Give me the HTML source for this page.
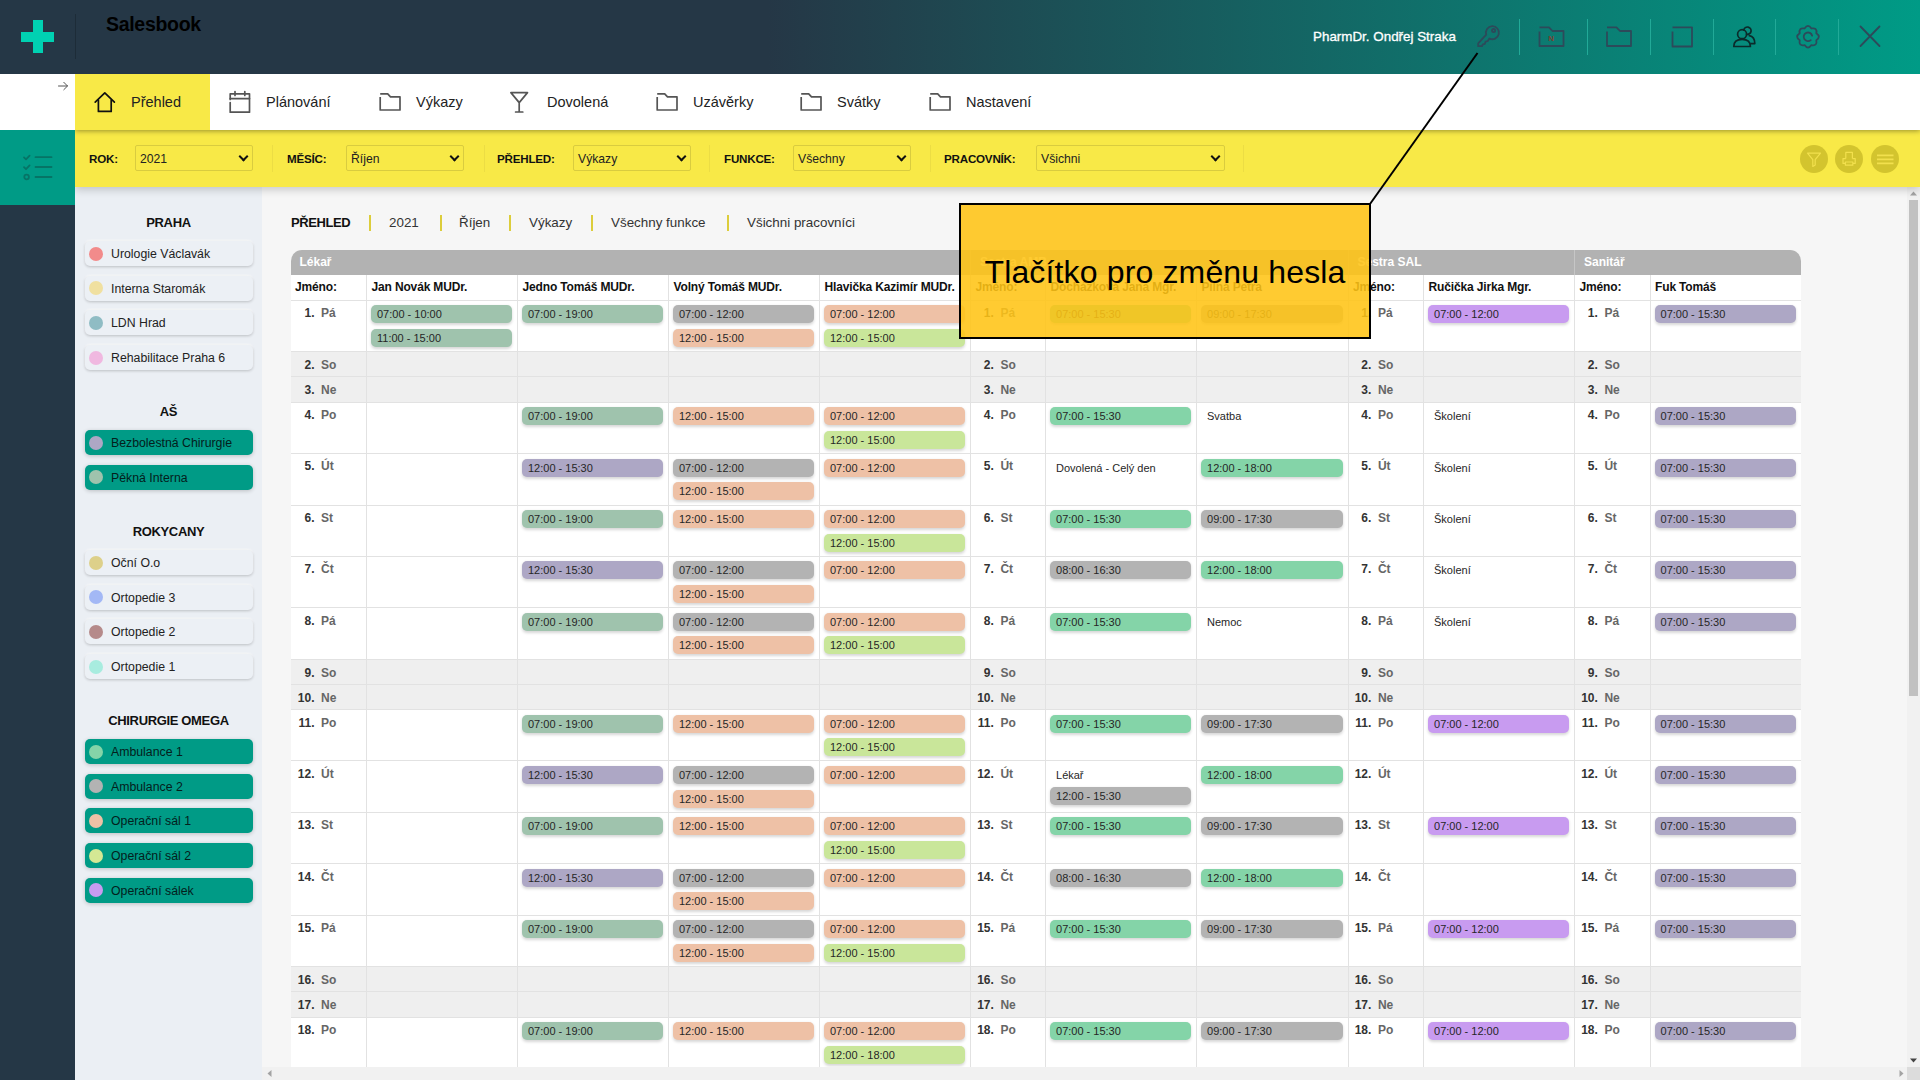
<!DOCTYPE html>
<html lang="cs">
<head>
<meta charset="utf-8">
<title>Salesbook</title>
<style>
*{box-sizing:border-box}
html,body{margin:0;padding:0}
body{width:1920px;height:1080px;overflow:hidden;position:relative;background:#f6f6f6;font-family:"Liberation Sans",sans-serif;color:#222}
#hdr{position:absolute;left:0;top:0;width:1920px;height:74px;background:linear-gradient(90deg,#253746 0%,#253746 40%,#009b86 100%)}
#logo{position:absolute;left:21px;top:20px;width:33px;height:33px}
#logo:before{content:"";position:absolute;left:11.5px;top:0;width:10px;height:33px;background:#00d1b2}
#logo:after{content:"";position:absolute;left:0;top:11.5px;width:33px;height:10px;background:#00d1b2}
#hdiv{position:absolute;left:75px;top:14px;width:1px;height:45px;background:#1d2c38}
#brand{position:absolute;left:106px;top:12px;font-weight:bold;font-size:19.5px;color:#000;line-height:24px;letter-spacing:-0.3px}
#user{position:absolute;left:1313px;top:28px;-webkit-text-stroke:.3px #fff;font-size:13.4px;color:#fff;line-height:18px;white-space:nowrap}
.hd{position:absolute;top:19px;width:1.8px;height:36px;background:#22aa98;margin-left:.7px}
.hi{position:absolute}
#side{position:absolute;left:0;top:74px;width:75px;height:1006px;background:#253746}
#sidew{position:absolute;left:0;top:0;width:75px;height:56px;background:#fff}
#sidet{position:absolute;left:0;top:56px;width:75px;height:75px;background:#009b86}
#nav{position:absolute;left:75px;top:74px;width:1845px;height:56px;background:#fff;box-shadow:0 1px 5px rgba(0,0,0,.38);z-index:3;clip-path:inset(0 0 -12px 0)}
.tab{position:absolute;top:0;height:56px;font-size:14.5px;line-height:56px;color:#222;white-space:nowrap}
.tab svg{position:absolute}
.tab span{position:absolute;top:0}
#tab0{left:0;width:135px;background:#f8e947}
#fbar{position:absolute;left:75px;top:130px;width:1845px;height:57px;background:#f8e947;box-shadow:0 3px 8px rgba(0,0,0,.18);z-index:2;clip-path:inset(0 0 -16px 0)}
.fl{position:absolute;top:0;line-height:57px;font-size:11.6px;letter-spacing:-.2px;font-weight:bold;color:#111;white-space:nowrap}
.fs{position:absolute;top:15px;height:26px;border:1px solid #d9cc3f;border-radius:2px;font-size:12.2px;line-height:24px;padding:1px 0 0 4px;color:#222}
.fs:after{content:"";position:absolute;right:5.4px;top:7.3px;width:5px;height:5px;border-right:2px solid #111;border-bottom:2px solid #111;transform:rotate(45deg)}
.fsep{position:absolute;top:15px;width:1px;height:27px;background:#ecdd44}
.fb{position:absolute;top:15px;width:28px;height:28px;border-radius:50%;background:#d3c42e}
#panel{position:absolute;left:75px;top:187px;width:187px;height:893px;background:#ebeff4;z-index:1}
.pt{font-weight:bold;font-size:13px;letter-spacing:-.35px;color:#111;text-align:center;line-height:20px;height:20px;margin-bottom:8.6px}
.pi{position:relative;margin:0 9px 9.6px 10px;height:25px;border-radius:5px;background:#ecf0f5;box-shadow:0 1px 3px rgba(0,0,0,.2),0 -1px 2px rgba(255,255,255,.9);font-size:12.3px;line-height:26px;padding-left:26px;color:#222;white-space:nowrap}
.pi i{position:absolute;left:4.3px;top:5.5px;width:14px;height:14px;border-radius:50%}
.pi.sel{background:#009b86;color:#04201c;box-shadow:0 1px 4px rgba(0,0,0,.2)}
.pgap{height:22.1px}
#main{position:absolute;left:262px;top:187px;width:1645px;height:880px;overflow:hidden;background:#f6f6f6}
#crumb{position:absolute;left:29px;top:25.8px;height:20px;line-height:20px;font-size:13.4px;white-space:nowrap;color:#333}
#crumb b{color:#111;font-size:13px;letter-spacing:-.4px}
#crumb span{position:absolute;top:0}
#crumb i{position:absolute;top:2px;width:1.7px;height:16px;background:#dccd3c}
table.sched{position:absolute;left:28.5px;top:63px;border-collapse:separate;border-spacing:0;table-layout:fixed;width:1510px}
col.cd{width:75.5px}col.cn{width:151px}
.sched th,.sched td{padding:0;margin:0;text-align:left;vertical-align:top;font-size:12px;overflow:hidden}
th.gh{height:25px;background:#b2b2b2;color:#fff;font-weight:bold;font-size:12px;line-height:24.6px;padding-left:9px;border-left:1px solid #c6c6c6}
th.gh.first{border-top-left-radius:11px;border-left:0}
th.gh.last{border-top-right-radius:11px}
th.nm{height:26px;line-height:24.6px;letter-spacing:-.15px;background:#fff;color:#111;font-weight:bold;border-bottom:1px solid #e2e2e2;border-left:1px solid #e2e2e2;padding-left:4.5px;white-space:nowrap}
.sched td{background:#fff;border-bottom:1px solid #e2e2e2;border-left:1px solid #e2e2e2}

tr.we td{background:#efefef}
tr.wd td{padding-top:var(--o,0px)}
.sched td.day{white-space:nowrap;line-height:14px;padding-top:calc(5.3px + var(--o,0px))}
.sched tr>*:first-child{border-left:0}
td.day:first-child .n{width:24px}
.sched tr.we td.day{padding-top:6.2px}
td.day .n{display:inline-block;width:22.8px;text-align:right;font-weight:bold;color:#333}
td.day .d{display:inline-block;margin-left:6.6px;color:#666;font-weight:bold}
.pill{height:18px;margin:4.4px 5px 0 4px;border-radius:5px;font-size:11px;line-height:18px;padding-left:6px;color:#262626;box-shadow:0 1.5px 3px rgba(0,0,0,.16);white-space:nowrap}
.pill.txt{box-shadow:none;background:none}
.pill+.pill{margin-top:5.25px}
.pill.txt+.pill{margin-top:3.2px}
#vs{position:absolute;left:1907px;top:187px;width:13px;height:880px;background:#f1f1f1}
#vs .th{position:absolute;left:2px;top:13px;width:9px;height:496px;background:#c1c1c1}
#hs{position:absolute;left:262px;top:1067px;width:1645px;height:13px;background:#f1f1f1}
#corner{position:absolute;left:1907px;top:1067px;width:13px;height:13px;background:#dcdcdc}
#callout{position:absolute;left:959px;top:203.3px;width:412px;height:135.7px;background:rgba(255,196,20,.88);border:2px solid #000;z-index:10}
#callout div{position:absolute;left:0;top:46.5px;width:100%;text-align:center;font-size:32px;letter-spacing:.15px;line-height:40px;color:#000;white-space:nowrap}
#cline{position:absolute;left:0;top:0;width:1920px;height:1080px;z-index:11;pointer-events:none}
</style>
</head>
<body>
<div id="hdr">
  <div id="logo"></div>
  <div id="hdiv"></div>
  <div id="brand">Salesbook</div>
  <div id="user">PharmDr. Ondřej Straka</div>
  <div class="hd" style="left:1518px"></div>
  <div class="hd" style="left:1586px"></div>
  <div class="hd" style="left:1649px"></div>
  <div class="hd" style="left:1712px"></div>
  <div class="hd" style="left:1774px"></div>
  <div class="hd" style="left:1837px"></div>
  <!-- key -->
  <svg class="hi" style="left:1474px;top:22px" width="30" height="30" viewBox="0 0 30 30" fill="none" stroke="#2d4a5a" stroke-width="1.8" stroke-linecap="round" stroke-linejoin="round"><path d="M12.22 12.71 A6.5 6.5 0 1 1 15.38 16.45 L13.6 19.2 L11.5 19.7 L10.9 21.8 L8.8 22.3 L8 24.2 L4.2 24.2 L4.2 21.4 Z"/><circle cx="19.6" cy="8.6" r="1.6"/></svg>
  <!-- folder N -->
  <svg class="hi" style="left:1536px;top:22px" width="30" height="30" viewBox="0 0 30 30" fill="none" stroke="#2d4a5a" stroke-width="1.8" stroke-linejoin="round"><path d="M3.5 5.3 H13 L16.5 9 H27.5 V24 H3.5 V9.5"/><text x="12.2" y="18.6" font-family="Liberation Sans, sans-serif" font-size="8" font-weight="bold" fill="#7c4232" stroke="none">N</text></svg>
  <!-- folder -->
  <svg class="hi" style="left:1603px;top:22px" width="30" height="30" viewBox="0 0 30 30" fill="none" stroke="#2d4a5a" stroke-width="1.8" stroke-linejoin="round"><path d="M4 5.3 H13.5 L17 9 H28 V24 H4 V9.5"/></svg>
  <!-- square -->
  <svg class="hi" style="left:1667px;top:22px" width="30" height="30" viewBox="0 0 30 30" fill="none" stroke="#2d4a5a" stroke-width="1.8" stroke-linejoin="round"><path d="M5.5 5.3 H25 V24.5 H5.5 V9.5"/></svg>
  <!-- users -->
  <svg class="hi" style="left:1729px;top:22px" width="30" height="30" viewBox="0 0 30 30" fill="none" stroke="#0b2b2b" stroke-width="1.7" stroke-linecap="round" stroke-linejoin="round"><circle cx="13.1" cy="12.2" r="4.5"/><path d="M14.76 8.02 A3.70 3.70 0 1 1 17.60 12.31"/><path d="M4.8 24.5 C4.8 19.6 8.4 17.4 13.1 17.4 C17.8 17.4 21.4 19.6 21.4 24.5 Z"/><path d="M20.3 13.6 C23.6 14.2 25.8 17 25.8 21.6 H22"/></svg>
  <!-- gear -->
  <svg class="hi" style="left:1793px;top:22px" width="30" height="30" viewBox="0 0 30 30" fill="none" stroke="#2d4a5a" stroke-width="1.8" stroke-linecap="round" stroke-linejoin="round"><path d="M11.56 6.49 Q15.00 1.40 18.44 6.49 Q24.48 5.32 23.31 11.36 Q28.40 14.80 23.31 18.24 Q24.48 24.28 18.44 23.11 Q15.00 28.20 11.56 23.11 Q5.52 24.28 6.69 18.24 Q1.60 14.80 6.69 11.36 Q5.52 5.32 11.56 6.49 Z"/><path d="M19.15 13.69 A4.30 4.30 0 1 0 17.76 18.09"/></svg>
  <!-- close -->
  <svg class="hi" style="left:1855px;top:22px" width="30" height="30" viewBox="0 0 30 30" fill="none" stroke="#2d4a5a" stroke-width="1.8" stroke-linecap="round"><path d="M5.5 4.5 L24.5 24 M24.5 4.5 L5.5 24"/></svg>
</div>
<div id="side">
  <div id="sidew"><svg style="position:absolute;left:57px;top:6px" width="12" height="12" viewBox="0 0 12 12" fill="none" stroke="#555" stroke-width="1" stroke-linecap="round" stroke-linejoin="round"><path d="M1.5 6 H10.5 M6.8 2.3 L10.5 6 L6.8 9.7"/></svg></div>
  <div id="sidet"><svg style="position:absolute;left:22px;top:24px" width="32" height="28" viewBox="0 0 32 28" fill="none" stroke="#067466" stroke-width="1.8" stroke-linecap="round" stroke-linejoin="round"><path d="M13.5 3.2 H29.5 M13.5 13 H29.5 M13.5 23 H29.5"/><path d="M2 3.4 L4 5.4 L7.6 1.6 M2 13.2 L4 15.2 L7.6 11.4"/><circle cx="4.6" cy="23" r="2.3"/></svg></div>
</div>
<div id="nav">
  <div class="tab" id="tab0">
    <svg style="left:18px;top:17px" width="24" height="24" viewBox="0 0 24 24" fill="none" stroke="#111" stroke-width="1.7" stroke-linecap="round" stroke-linejoin="round"><path d="M2.2 11.2 L11.8 1.8 L21.4 11.2"/><path d="M5.4 9 V20.4 H18.2 V9"/></svg>
    <span style="left:56px">Přehled</span>
  </div>
  <div class="tab" style="left:135px">
    <svg style="left:18.2px;top:16px" width="24" height="24" viewBox="0 0 24 24" fill="none" stroke="#555" stroke-width="1.7" stroke-linecap="round" stroke-linejoin="round"><path d="M2.2 9.5 V3.8 H21.5 V22.2 H2.2 V12.5"/><path d="M2.2 8.6 H21.5 M7 1.6 V5.4 M16.8 1.6 V5.4"/></svg>
    <span style="left:56px">Plánování</span>
  </div>
  <div class="tab" style="left:285px">
    <svg style="left:17.6px;top:17px" width="24" height="24" viewBox="0 0 24 24" fill="none" stroke="#555" stroke-width="1.7" stroke-linejoin="round"><path d="M2.2 2.8 H9.7 L12.5 5.8 H22 V19 H2.2 V6"/></svg>
    <span style="left:56px">Výkazy</span>
  </div>
  <div class="tab" style="left:416px">
    <svg style="left:17px;top:16px" width="24" height="24" viewBox="0 0 24 24" fill="none" stroke="#555" stroke-width="1.7" stroke-linecap="round" stroke-linejoin="round"><path d="M2.9 2.6 H19.5 L11.2 12.6 Z M11.2 12.6 V22 M7.6 22 H14.8"/></svg>
    <span style="left:56px">Dovolená</span>
  </div>
  <div class="tab" style="left:562px">
    <svg style="left:17.6px;top:17px" width="24" height="24" viewBox="0 0 24 24" fill="none" stroke="#555" stroke-width="1.7" stroke-linejoin="round"><path d="M2.2 2.8 H9.7 L12.5 5.8 H22 V19 H2.2 V6"/></svg>
    <span style="left:56px">Uzávěrky</span>
  </div>
  <div class="tab" style="left:706px">
    <svg style="left:17.6px;top:17px" width="24" height="24" viewBox="0 0 24 24" fill="none" stroke="#555" stroke-width="1.7" stroke-linejoin="round"><path d="M2.2 2.8 H9.7 L12.5 5.8 H22 V19 H2.2 V6"/></svg>
    <span style="left:56px">Svátky</span>
  </div>
  <div class="tab" style="left:835px">
    <svg style="left:17.6px;top:17px" width="24" height="24" viewBox="0 0 24 24" fill="none" stroke="#555" stroke-width="1.7" stroke-linejoin="round"><path d="M2.2 2.8 H9.7 L12.5 5.8 H22 V19 H2.2 V6"/></svg>
    <span style="left:56px">Nastavení</span>
  </div>
</div>
<div id="fbar">
  <div class="fl" style="left:14px">ROK:</div><div class="fs" style="left:60px;width:118px">2021</div><div class="fsep" style="left:197px"></div>
  <div class="fl" style="left:212px">MĚSÍC:</div><div class="fs" style="left:271px;width:118px">Říjen</div><div class="fsep" style="left:409px"></div>
  <div class="fl" style="left:422px">PŘEHLED:</div><div class="fs" style="left:498px;width:118px">Výkazy</div><div class="fsep" style="left:634px"></div>
  <div class="fl" style="left:649px">FUNKCE:</div><div class="fs" style="left:718px;width:118px">Všechny</div><div class="fsep" style="left:855px"></div>
  <div class="fl" style="left:869px">PRACOVNÍK:</div><div class="fs" style="left:961px;width:189px">Všichni</div><div class="fsep" style="left:1168px"></div>
  <div class="fb" style="left:1725px"><svg width="28" height="28" viewBox="0 0 28 28" fill="none" stroke="#f2e04d" stroke-width="1.2" stroke-linejoin="round"><path d="M7.5 8.2 H20.5 L15.2 14.6 V20 L12.8 21.4 V14.6 Z"/></svg></div>
  <div class="fb" style="left:1760px"><svg width="28" height="28" viewBox="0 0 28 28" fill="none" stroke="#f2e04d" stroke-width="1.2" stroke-linejoin="round"><path d="M10.8 13.6 V7.4 H17.4 V13.6 M10.8 13.6 H8 V18.4 H10.4 M17.8 18.4 H20.2 V13.6 H17.4 M10.4 17 H17.8 V20.2 H10.4 Z"/></svg></div>
  <div class="fb" style="left:1796px"><svg width="28" height="28" viewBox="0 0 28 28" fill="none" stroke="#f2e04d" stroke-width="1.8"><path d="M6 10.4 H22.5 M6 14.4 H22.5 M6 18.4 H22.5"/></svg></div>
</div>
<div id="panel"><div style="height:25.7px"></div>
<div class="pt">PRAHA</div>
<div class="pi"><i style="background:#f28b8b"></i>Urologie Václavák</div>
<div class="pi"><i style="background:#f0e0a0"></i>Interna Staromák</div>
<div class="pi"><i style="background:#8fbcc4"></i>LDN Hrad</div>
<div class="pi"><i style="background:#f0b8e0"></i>Rehabilitace Praha 6</div>
<div class="pgap"></div>
<div class="pt">AŠ</div>
<div class="pi sel"><i style="background:#ada7c5"></i>Bezbolestná Chirurgie</div>
<div class="pi sel"><i style="background:#9fc3ad"></i>Pěkná Interna</div>
<div class="pgap"></div>
<div class="pt">ROKYCANY</div>
<div class="pi"><i style="background:#ddd08a"></i>Oční O.o</div>
<div class="pi"><i style="background:#a3b8f5"></i>Ortopedie 3</div>
<div class="pi"><i style="background:#b58a8a"></i>Ortopedie 2</div>
<div class="pi"><i style="background:#a8ecdf"></i>Ortopedie 1</div>
<div class="pgap"></div>
<div class="pt">CHIRURGIE OMEGA</div>
<div class="pi sel"><i style="background:#84d4a8"></i>Ambulance 1</div>
<div class="pi sel"><i style="background:#b3b3b3"></i>Ambulance 2</div>
<div class="pi sel"><i style="background:#eec1a6"></i>Operační sál 1</div>
<div class="pi sel"><i style="background:#d4e894"></i>Operační sál 2</div>
<div class="pi sel"><i style="background:#c89bf0"></i>Operační sálek</div>
<div class="pgap"></div>
</div>
<div id="main">
  <div id="crumb"><b style="position:absolute;left:0;top:0">PŘEHLED</b><i style="left:78px"></i><span style="left:98px">2021</span><i style="left:149px"></i><span style="left:168px">Říjen</span><i style="left:218px"></i><span style="left:238px">Výkazy</span><i style="left:300px"></i><span style="left:320px">Všechny funkce</span><i style="left:436px"></i><span style="left:456px">Všichni pracovníci</span></div>
<table class="sched"><colgroup><col style="width:75.5px"><col style="width:151px"><col style="width:151px"><col style="width:151px"><col style="width:151px"><col style="width:75px"><col style="width:151px"><col style="width:151.5px"><col style="width:75.5px"><col style="width:151px"><col style="width:75.5px"><col style="width:151px"></colgroup>
<tr class="rg"><th class="gh first" colspan="5">Lékař</th><th class="gh" colspan="3">Sestra AMB</th><th class="gh" colspan="2">Sestra SAL</th><th class="gh last" colspan="2">Sanitář</th></tr>
<tr class="rn"><th class="nm">Jméno:</th><th class="nm">Jan Novák MUDr.</th><th class="nm">Jedno Tomáš MUDr.</th><th class="nm">Volný Tomáš MUDr.</th><th class="nm">Hlavička Kazimír MUDr.</th><th class="nm">Jméno:</th><th class="nm">Docházková Jana Mgr.</th><th class="nm">Pilná Petra</th><th class="nm">Jméno:</th><th class="nm">Ručička Jirka Mgr.</th><th class="nm">Jméno:</th><th class="nm">Fuk Tomáš</th></tr>
<tr class="wd" style="height:51px;--o:0px"><td class="day"><span class="n">1.</span><span class="d">Pá</span></td><td><div class="pill" style="background:#9fc3ad">07:00 - 10:00</div><div class="pill" style="background:#9fc3ad">11:00 - 15:00</div></td><td><div class="pill" style="background:#9fc3ad">07:00 - 19:00</div></td><td><div class="pill" style="background:#b3b3b3">07:00 - 12:00</div><div class="pill" style="background:#eec1a6">12:00 - 15:00</div></td><td><div class="pill" style="background:#eec1a6">07:00 - 12:00</div><div class="pill" style="background:#c9e69a">12:00 - 15:00</div></td><td class="day"><span class="n">1.</span><span class="d">Pá</span></td><td><div class="pill" style="background:#84d4a8">07:00 - 15:30</div></td><td><div class="pill" style="background:#b3b3b3">09:00 - 17:30</div></td><td class="day"><span class="n">1.</span><span class="d">Pá</span></td><td><div class="pill" style="background:#c89bf0">07:00 - 12:00</div></td><td class="day"><span class="n">1.</span><span class="d">Pá</span></td><td><div class="pill" style="background:#ada7c5">07:00 - 15:30</div></td></tr>
<tr class="we" style="height:25px;--o:0px"><td class="day"><span class="n">2.</span><span class="d">So</span></td><td></td><td></td><td></td><td></td><td class="day"><span class="n">2.</span><span class="d">So</span></td><td></td><td></td><td class="day"><span class="n">2.</span><span class="d">So</span></td><td></td><td class="day"><span class="n">2.</span><span class="d">So</span></td><td></td></tr>
<tr class="we" style="height:26px;--o:0px"><td class="day"><span class="n">3.</span><span class="d">Ne</span></td><td></td><td></td><td></td><td></td><td class="day"><span class="n">3.</span><span class="d">Ne</span></td><td></td><td></td><td class="day"><span class="n">3.</span><span class="d">Ne</span></td><td></td><td class="day"><span class="n">3.</span><span class="d">Ne</span></td><td></td></tr>
<tr class="wd" style="height:51px;--o:-0.3px"><td class="day"><span class="n">4.</span><span class="d">Po</span></td><td></td><td><div class="pill" style="background:#9fc3ad">07:00 - 19:00</div></td><td><div class="pill" style="background:#eec1a6">12:00 - 15:00</div></td><td><div class="pill" style="background:#eec1a6">07:00 - 12:00</div><div class="pill" style="background:#c9e69a">12:00 - 15:00</div></td><td class="day"><span class="n">4.</span><span class="d">Po</span></td><td><div class="pill" style="background:#84d4a8">07:00 - 15:30</div></td><td><div class="pill txt">Svatba</div></td><td class="day"><span class="n">4.</span><span class="d">Po</span></td><td><div class="pill txt">Školení</div></td><td class="day"><span class="n">4.</span><span class="d">Po</span></td><td><div class="pill" style="background:#ada7c5">07:00 - 15:30</div></td></tr>
<tr class="wd" style="height:52px;--o:0.15px"><td class="day"><span class="n">5.</span><span class="d">Út</span></td><td></td><td><div class="pill" style="background:#ada7c5">12:00 - 15:30</div></td><td><div class="pill" style="background:#b3b3b3">07:00 - 12:00</div><div class="pill" style="background:#eec1a6">12:00 - 15:00</div></td><td><div class="pill" style="background:#eec1a6">07:00 - 12:00</div></td><td class="day"><span class="n">5.</span><span class="d">Út</span></td><td><div class="pill txt">Dovolená - Celý den</div></td><td><div class="pill" style="background:#84d4a8">12:00 - 18:00</div></td><td class="day"><span class="n">5.</span><span class="d">Út</span></td><td><div class="pill txt">Školení</div></td><td class="day"><span class="n">5.</span><span class="d">Út</span></td><td><div class="pill" style="background:#ada7c5">07:00 - 15:30</div></td></tr>
<tr class="wd" style="height:51px;--o:-0.4px"><td class="day"><span class="n">6.</span><span class="d">St</span></td><td></td><td><div class="pill" style="background:#9fc3ad">07:00 - 19:00</div></td><td><div class="pill" style="background:#eec1a6">12:00 - 15:00</div></td><td><div class="pill" style="background:#eec1a6">07:00 - 12:00</div><div class="pill" style="background:#c9e69a">12:00 - 15:00</div></td><td class="day"><span class="n">6.</span><span class="d">St</span></td><td><div class="pill" style="background:#84d4a8">07:00 - 15:30</div></td><td><div class="pill" style="background:#b3b3b3">09:00 - 17:30</div></td><td class="day"><span class="n">6.</span><span class="d">St</span></td><td><div class="pill txt">Školení</div></td><td class="day"><span class="n">6.</span><span class="d">St</span></td><td><div class="pill" style="background:#ada7c5">07:00 - 15:30</div></td></tr>
<tr class="wd" style="height:51px;--o:0.05px"><td class="day"><span class="n">7.</span><span class="d">Čt</span></td><td></td><td><div class="pill" style="background:#ada7c5">12:00 - 15:30</div></td><td><div class="pill" style="background:#b3b3b3">07:00 - 12:00</div><div class="pill" style="background:#eec1a6">12:00 - 15:00</div></td><td><div class="pill" style="background:#eec1a6">07:00 - 12:00</div></td><td class="day"><span class="n">7.</span><span class="d">Čt</span></td><td><div class="pill" style="background:#b3b3b3">08:00 - 16:30</div></td><td><div class="pill" style="background:#84d4a8">12:00 - 18:00</div></td><td class="day"><span class="n">7.</span><span class="d">Čt</span></td><td><div class="pill txt">Školení</div></td><td class="day"><span class="n">7.</span><span class="d">Čt</span></td><td><div class="pill" style="background:#ada7c5">07:00 - 15:30</div></td></tr>
<tr class="wd" style="height:52px;--o:0.5px"><td class="day"><span class="n">8.</span><span class="d">Pá</span></td><td></td><td><div class="pill" style="background:#9fc3ad">07:00 - 19:00</div></td><td><div class="pill" style="background:#b3b3b3">07:00 - 12:00</div><div class="pill" style="background:#eec1a6">12:00 - 15:00</div></td><td><div class="pill" style="background:#eec1a6">07:00 - 12:00</div><div class="pill" style="background:#c9e69a">12:00 - 15:00</div></td><td class="day"><span class="n">8.</span><span class="d">Pá</span></td><td><div class="pill" style="background:#84d4a8">07:00 - 15:30</div></td><td><div class="pill txt">Nemoc</div></td><td class="day"><span class="n">8.</span><span class="d">Pá</span></td><td><div class="pill txt">Školení</div></td><td class="day"><span class="n">8.</span><span class="d">Pá</span></td><td><div class="pill" style="background:#ada7c5">07:00 - 15:30</div></td></tr>
<tr class="we" style="height:25px;--o:0px"><td class="day"><span class="n">9.</span><span class="d">So</span></td><td></td><td></td><td></td><td></td><td class="day"><span class="n">9.</span><span class="d">So</span></td><td></td><td></td><td class="day"><span class="n">9.</span><span class="d">So</span></td><td></td><td class="day"><span class="n">9.</span><span class="d">So</span></td><td></td></tr>
<tr class="we" style="height:25px;--o:0px"><td class="day"><span class="n">10.</span><span class="d">Ne</span></td><td></td><td></td><td></td><td></td><td class="day"><span class="n">10.</span><span class="d">Ne</span></td><td></td><td></td><td class="day"><span class="n">10.</span><span class="d">Ne</span></td><td></td><td class="day"><span class="n">10.</span><span class="d">Ne</span></td><td></td></tr>
<tr class="wd" style="height:51px;--o:0.2px"><td class="day"><span class="n">11.</span><span class="d">Po</span></td><td></td><td><div class="pill" style="background:#9fc3ad">07:00 - 19:00</div></td><td><div class="pill" style="background:#eec1a6">12:00 - 15:00</div></td><td><div class="pill" style="background:#eec1a6">07:00 - 12:00</div><div class="pill" style="background:#c9e69a">12:00 - 15:00</div></td><td class="day"><span class="n">11.</span><span class="d">Po</span></td><td><div class="pill" style="background:#84d4a8">07:00 - 15:30</div></td><td><div class="pill" style="background:#b3b3b3">09:00 - 17:30</div></td><td class="day"><span class="n">11.</span><span class="d">Po</span></td><td><div class="pill" style="background:#c89bf0">07:00 - 12:00</div></td><td class="day"><span class="n">11.</span><span class="d">Po</span></td><td><div class="pill" style="background:#ada7c5">07:00 - 15:30</div></td></tr>
<tr class="wd" style="height:52px;--o:0.9px"><td class="day"><span class="n">12.</span><span class="d">Út</span></td><td></td><td><div class="pill" style="background:#ada7c5">12:00 - 15:30</div></td><td><div class="pill" style="background:#b3b3b3">07:00 - 12:00</div><div class="pill" style="background:#eec1a6">12:00 - 15:00</div></td><td><div class="pill" style="background:#eec1a6">07:00 - 12:00</div></td><td class="day"><span class="n">12.</span><span class="d">Út</span></td><td><div class="pill txt">Lékař</div><div class="pill" style="background:#b3b3b3">12:00 - 15:30</div></td><td><div class="pill" style="background:#84d4a8">12:00 - 18:00</div></td><td class="day"><span class="n">12.</span><span class="d">Út</span></td><td></td><td class="day"><span class="n">12.</span><span class="d">Út</span></td><td><div class="pill" style="background:#ada7c5">07:00 - 15:30</div></td></tr>
<tr class="wd" style="height:51px;--o:0.1px"><td class="day"><span class="n">13.</span><span class="d">St</span></td><td></td><td><div class="pill" style="background:#9fc3ad">07:00 - 19:00</div></td><td><div class="pill" style="background:#eec1a6">12:00 - 15:00</div></td><td><div class="pill" style="background:#eec1a6">07:00 - 12:00</div><div class="pill" style="background:#c9e69a">12:00 - 15:00</div></td><td class="day"><span class="n">13.</span><span class="d">St</span></td><td><div class="pill" style="background:#84d4a8">07:00 - 15:30</div></td><td><div class="pill" style="background:#b3b3b3">09:00 - 17:30</div></td><td class="day"><span class="n">13.</span><span class="d">St</span></td><td><div class="pill" style="background:#c89bf0">07:00 - 12:00</div></td><td class="day"><span class="n">13.</span><span class="d">St</span></td><td><div class="pill" style="background:#ada7c5">07:00 - 15:30</div></td></tr>
<tr class="wd" style="height:52px;--o:0.55px"><td class="day"><span class="n">14.</span><span class="d">Čt</span></td><td></td><td><div class="pill" style="background:#ada7c5">12:00 - 15:30</div></td><td><div class="pill" style="background:#b3b3b3">07:00 - 12:00</div><div class="pill" style="background:#eec1a6">12:00 - 15:00</div></td><td><div class="pill" style="background:#eec1a6">07:00 - 12:00</div></td><td class="day"><span class="n">14.</span><span class="d">Čt</span></td><td><div class="pill" style="background:#b3b3b3">08:00 - 16:30</div></td><td><div class="pill" style="background:#84d4a8">12:00 - 18:00</div></td><td class="day"><span class="n">14.</span><span class="d">Čt</span></td><td></td><td class="day"><span class="n">14.</span><span class="d">Čt</span></td><td><div class="pill" style="background:#ada7c5">07:00 - 15:30</div></td></tr>
<tr class="wd" style="height:51px;--o:0px"><td class="day"><span class="n">15.</span><span class="d">Pá</span></td><td></td><td><div class="pill" style="background:#9fc3ad">07:00 - 19:00</div></td><td><div class="pill" style="background:#b3b3b3">07:00 - 12:00</div><div class="pill" style="background:#eec1a6">12:00 - 15:00</div></td><td><div class="pill" style="background:#eec1a6">07:00 - 12:00</div><div class="pill" style="background:#c9e69a">12:00 - 15:00</div></td><td class="day"><span class="n">15.</span><span class="d">Pá</span></td><td><div class="pill" style="background:#84d4a8">07:00 - 15:30</div></td><td><div class="pill" style="background:#b3b3b3">09:00 - 17:30</div></td><td class="day"><span class="n">15.</span><span class="d">Pá</span></td><td><div class="pill" style="background:#c89bf0">07:00 - 12:00</div></td><td class="day"><span class="n">15.</span><span class="d">Pá</span></td><td><div class="pill" style="background:#ada7c5">07:00 - 15:30</div></td></tr>
<tr class="we" style="height:25px;--o:0px"><td class="day"><span class="n">16.</span><span class="d">So</span></td><td></td><td></td><td></td><td></td><td class="day"><span class="n">16.</span><span class="d">So</span></td><td></td><td></td><td class="day"><span class="n">16.</span><span class="d">So</span></td><td></td><td class="day"><span class="n">16.</span><span class="d">So</span></td><td></td></tr>
<tr class="we" style="height:26px;--o:0px"><td class="day"><span class="n">17.</span><span class="d">Ne</span></td><td></td><td></td><td></td><td></td><td class="day"><span class="n">17.</span><span class="d">Ne</span></td><td></td><td></td><td class="day"><span class="n">17.</span><span class="d">Ne</span></td><td></td><td class="day"><span class="n">17.</span><span class="d">Ne</span></td><td></td></tr>
<tr class="wd" style="height:51.4px;--o:-0.3px"><td class="day"><span class="n">18.</span><span class="d">Po</span></td><td></td><td><div class="pill" style="background:#9fc3ad">07:00 - 19:00</div></td><td><div class="pill" style="background:#eec1a6">12:00 - 15:00</div></td><td><div class="pill" style="background:#eec1a6">07:00 - 12:00</div><div class="pill" style="background:#c9e69a">12:00 - 18:00</div></td><td class="day"><span class="n">18.</span><span class="d">Po</span></td><td><div class="pill" style="background:#84d4a8">07:00 - 15:30</div></td><td><div class="pill" style="background:#b3b3b3">09:00 - 17:30</div></td><td class="day"><span class="n">18.</span><span class="d">Po</span></td><td><div class="pill" style="background:#c89bf0">07:00 - 12:00</div></td><td class="day"><span class="n">18.</span><span class="d">Po</span></td><td><div class="pill" style="background:#ada7c5">07:00 - 15:30</div></td></tr></table>
</div>
<div id="vs"><div class="th"></div>
<svg style="position:absolute;left:3px;top:4px" width="7" height="5" viewBox="0 0 7 5"><path d="M0 4.5 L3.5 0.5 L7 4.5 Z" fill="#a3a3a3"/></svg>
<svg style="position:absolute;left:3px;top:871px" width="7" height="5" viewBox="0 0 7 5"><path d="M0 0.5 L3.5 4.5 L7 0.5 Z" fill="#444"/></svg>
</div>
<div id="hs">
<svg style="position:absolute;left:5px;top:3px" width="5" height="7" viewBox="0 0 5 7"><path d="M4.5 0 L0.5 3.5 L4.5 7 Z" fill="#a3a3a3"/></svg>
<svg style="position:absolute;left:1637px;top:3px" width="5" height="7" viewBox="0 0 5 7"><path d="M0.5 0 L4.5 3.5 L0.5 7 Z" fill="#a3a3a3"/></svg>
</div>
<div id="corner"></div>
<div id="callout"><div>Tlačítko pro změnu hesla</div></div>
<svg id="cline" viewBox="0 0 1920 1080"><path d="M1370 204 L1477.5 53" stroke="#000" stroke-width="2" fill="none"/></svg>
</body>
</html>
